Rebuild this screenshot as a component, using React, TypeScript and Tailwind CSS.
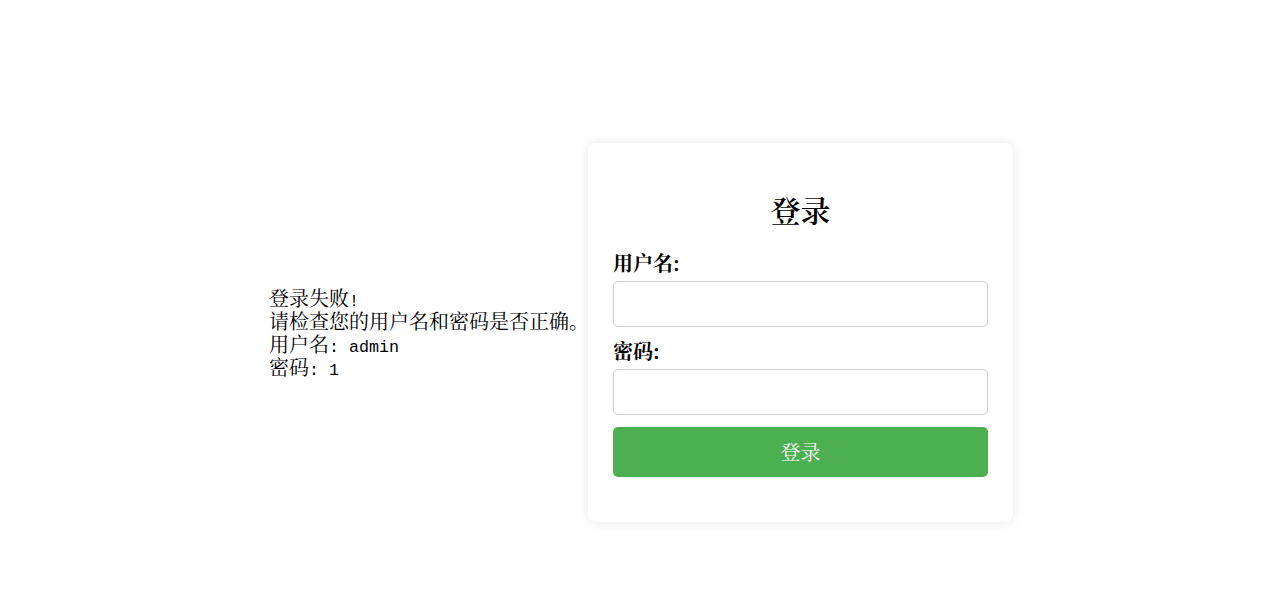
import React from "react";

const cjk = 'font-["Noto_Serif_CJK_SC","Noto_Sans_CJK_SC",serif]';
const mono = 'font-["Liberation_Mono",monospace] text-[16.7px] leading-none';

export default function App() {
  return (
    <div className={`flex h-[590px] w-full items-center justify-center bg-white pl-[9px] pt-[74px] text-black ${cjk}`}>
      <div className="w-[319px] whitespace-nowrap text-[20px] leading-[23px]">
        <div className="h-[23px]">
          登录失败<span className={mono}>!</span>
        </div>
        <div className="h-[23px]">请检查您的用户名和密码是否正确。</div>
        <div className="h-[23px]">
          用户名<span className={mono}>: admin</span>
        </div>
        <div className="h-[23px]">
          密码<span className={mono}>: 1</span>
        </div>
      </div>
      <div className="w-[425px] rounded-[8px] bg-white px-[25px] pb-[45px] pt-[25px] shadow-[0_0_12px_rgba(0,0,0,0.1)]">
        <div className="mt-[23px] h-[36px] text-center text-[30px] font-semibold leading-[36px]">登录</div>
        <div className="mt-[24.5px] h-[23px] text-[20px] font-bold leading-[23px]">用户名:</div>
        <input
          type="text"
          className="mt-[6.5px] block h-[46px] w-full rounded-[5px] border border-[#ccc] bg-white px-3 outline-none"
        />
        <div className="mt-[12.5px] h-[23px] text-[20px] font-bold leading-[23px]">密码:</div>
        <input
          type="password"
          className="mt-[6.5px] block h-[46px] w-full rounded-[5px] border border-[#ccc] bg-white px-3 outline-none"
        />
        <button className="mt-[12px] block h-[50px] w-full rounded-[5px] bg-[#4CAF50] text-[20px] text-white">
          登录
        </button>
      </div>
    </div>
  );
}
